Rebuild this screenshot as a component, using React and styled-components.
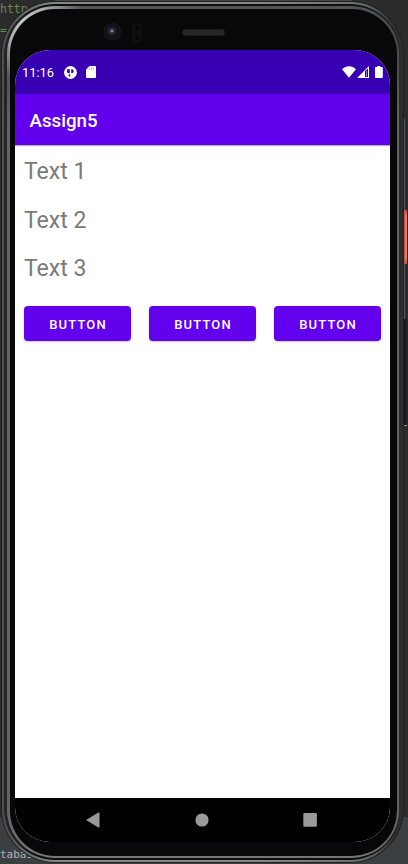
import React from "react";
import styled, { createGlobalStyle } from "styled-components";

const GlobalStyle = createGlobalStyle`
  * { box-sizing: border-box; }
  body { margin: 0; background: #2b2b2b; overflow: hidden; }
`;

const Desktop = styled.div`
  display: grid;
  width: 408px;
  height: 864px;
  overflow: hidden;
  background:
    linear-gradient(#454646, #454646) 55px 0 / 297px 2px no-repeat,
    linear-gradient(#2b2b2b 0 817px, #3c3f41 817px);
  font-family: Roboto, sans-serif;
`;

const Editor = styled.div`
  grid-area: 1 / 1;
  display: flex;
  flex-direction: column;
  padding: 2px 0;
  font: 11.5px/14px "DejaVu Sans Mono", monospace;
  color: #6a8759;
`;

const CodeLine = styled.span`
  margin-bottom: 7px;
`;

const PanelTab = styled.span`
  margin-top: auto;
  font-size: 11px;
  line-height: 14px;
  color: #b0b3b5;
`;

const Emulator = styled.div`
  grid-area: 1 / 1;
  display: flex;
  padding: 1px 0 0 1px;
`;

const Shell = styled.div`
  display: flex;
  flex: none;
  width: 403px;
  height: 862px;
  padding: 1px;
  border-radius: 54px;
  background: #202122;
`;

const OuterEdge = styled.div`
  display: flex;
  flex: 1;
  padding: 2px;
  border-radius: 53px;
  background: linear-gradient(90deg, #4c4e4f 0, #858787 12% 65%, #6c6e6e 90%, #2c2e30 98%);
`;

const Groove = styled.div`
  display: flex;
  flex: 1;
  padding: 2px 2px 2px 3px;
  border-radius: 51px;
  background: linear-gradient(90deg, #252627, #0d0e0f 10% 90%, #2a2c2e);
`;

const Rim = styled.div`
  display: flex;
  flex: 1;
  padding: 3px 2px 2px 3px;
  border-radius: 48px;
  background:
    radial-gradient(circle at 15px 13px, #c5c6c3 0, #aaaba8 24px, transparent 62px),
    linear-gradient(#555354 0, #464748 40px, #626465 120px, #626465 800px, #777);
`;

const Glass = styled.div`
  flex: 1;
  padding: 0 7px 14px 5px;
  border-radius: 45px;
  background: #08080a;
`;

const Hardware = styled.div`
  display: flex;
  align-items: flex-start;
  height: 41px;
  padding: 14px 0 0 88px;
`;

const Camera = styled.div`
  width: 19px;
  height: 19px;
  border-radius: 50%;
  background: radial-gradient(circle at 47% 42%, #85868f 0 1px, #24252f 2px, #1f2334 4px, #101012 5px, #161617 8px, #0c0c0d 10px);
`;

const Sensor = styled.div`
  width: 10px;
  height: 20px;
  margin-left: 10px;
  border-radius: 5px;
  background:
    radial-gradient(circle at 50% 5px, #070708 2px, #111112 3px, transparent 4px),
    radial-gradient(circle at 50% 15px, #070708 2px, #111112 3px, transparent 4px),
    #0f0f10;
`;

const Speaker = styled.div`
  width: 43px;
  height: 7px;
  margin: 6px 0 0 40px;
  border-radius: 3px;
  border: 1px solid #1b1b1c;
  background: #272727;
`;

const SideKeys = styled.div`
  flex: 1;
  display: flex;
  flex-direction: column;
  padding-top: 118px;
`;

const Key = styled.div`
  width: 3px;
  height: ${(p) => p.$h}px;
  border-left: 1px solid ${(p) => p.$edge};
  background: ${(p) => p.$fill};
`;

const Screen = styled.main`
  width: 375px;
  height: 792px;
  display: flex;
  flex-direction: column;
  border-radius: 35px;
  overflow: hidden;
  background: #fff;
`;

const StatusBar = styled.div`
  height: 44.4px;
  flex: none;
  display: flex;
  align-items: center;
  padding: 0 7px;
  background: #3700b3;
  color: #fff;
`;

const Clock = styled.span`
  width: 42px;
  padding-top: 1px;
  font-size: 12.9px;
  line-height: 16px;
`;

const StatusIcons = styled.div`
  display: flex;
  align-items: center;
  gap: ${(p) => p.$gap}px;
  margin-left: ${(p) => (p.$end ? "auto" : "0")};
  svg { display: block; }
`;

const AppBar = styled.header`
  height: 50.6px;
  flex: none;
  display: flex;
  align-items: center;
  padding: 2px 14.5px 0;
  background: #6200ee;
  color: #fff;
  font-size: 18.7px;
  font-weight: 500;
  box-shadow: 0 1px 1px rgba(0, 0, 0, 0.3);
`;

const Content = styled.section`
  flex: 1;
  padding: 9px 9px 0;
`;

const Label = styled.div`
  height: 48.7px;
  padding-top: 4px;
  font-size: 23px;
  line-height: 27px;
  color: #7a7a7a;
`;

const ButtonRow = styled.div`
  display: flex;
  justify-content: space-between;
  padding-top: 6px;
`;

const Button = styled.button`
  width: 107px;
  height: 35px;
  padding: 2px 0 0 1px;
  border: 0;
  border-radius: 4px;
  background: #6200ee;
  color: #fff;
  font: 500 13px/16px Roboto, sans-serif;
  letter-spacing: 1.15px;
  box-shadow: 0 1px 2px rgba(0, 0, 0, 0.22);
`;

const NavBar = styled.nav`
  height: 44px;
  flex: none;
  display: flex;
  align-items: center;
  justify-content: space-between;
  padding: 0 73px 0 71px;
  background: #000;
  svg { display: block; }
`;

export default function App() {
  return (
    <>
      <GlobalStyle />
      <Desktop>
        <Editor>
          <CodeLine>http</CodeLine>
          <CodeLine>=</CodeLine>
          <PanelTab>tabas</PanelTab>
        </Editor>
        <Emulator>
          <Shell>
            <OuterEdge>
              <Groove>
                <Rim>
                  <Glass>
                    <Hardware>
                      <Camera />
                      <Sensor />
                      <Speaker />
                    </Hardware>
                    <Screen>
                      <StatusBar>
                        <Clock>11:16</Clock>
                        <StatusIcons $gap={9}>
                          <svg width="13" height="13" viewBox="0 0 13 13">
                            <circle cx="6.5" cy="6.5" r="6.4" fill="#fff" />
                            <path d="M3 3.2h2.8v4.1H4.6A1.8 1.8 0 0 1 3 5.5Z" fill="#3700b3" />
                            <path d="M7.2 3.2h.6a1.9 1.9 0 0 1 0 3.9h-.6ZM4.6 8.3h1.6v2.6L4.6 9.8Z" fill="#3700b3" />
                          </svg>
                          <svg width="10" height="12" viewBox="0 0 10 12">
                            <path fill="#fff" d="M3.5 0H9a1 1 0 0 1 1 1v10a1 1 0 0 1-1 1H1a1 1 0 0 1-1-1V3.5Z" />
                            <path stroke="#3700b3" strokeWidth=".8" opacity=".4" d="M3.5 1.5v2M5.5 1.5v2M7.5 1.5v2" />
                          </svg>
                        </StatusIcons>
                        <StatusIcons $end $gap={1}>
                          <svg width="14" height="12" viewBox="0 0 14 12">
                            <path fill="#fff" d="M0 3.2C4-.9 10-.9 14 3.2L7 11.8Z" />
                          </svg>
                          <svg width="12" height="12" viewBox="0 0 12 12">
                            <path fill="#fff" fillRule="evenodd" d="M12 0v12H0ZM8 5v6h3V2.4Z" />
                            <path fill="#fff" d="M9 5h1v6H9z" opacity=".45" />
                          </svg>
                          <svg width="13" height="12" viewBox="0 0 13 12">
                            <path fill="#fff" d="M7.2 0h3v1H12a.8.8 0 0 1 .8.8V11a1 1 0 0 1-1 1H6a1 1 0 0 1-1-1V1.8A.8.8 0 0 1 5.8 1h1.4Z" />
                          </svg>
                        </StatusIcons>
                      </StatusBar>
                      <AppBar>Assign5</AppBar>
                      <Content>
                        <Label>Text 1</Label>
                        <Label>Text 2</Label>
                        <Label>Text 3</Label>
                        <ButtonRow>
                          <Button>BUTTON</Button>
                          <Button>BUTTON</Button>
                          <Button>BUTTON</Button>
                        </ButtonRow>
                      </Content>
                      <NavBar>
                        <svg width="14" height="16" viewBox="0 0 14 16"><path fill="#999" d="M0 8 12.5.4Q13.5 0 13.5 1v14q0 1-1 .6Z" /></svg>
                        <svg width="14" height="14" viewBox="0 0 14 14"><circle cx="7" cy="7" r="6.6" fill="#999" /></svg>
                        <svg width="14" height="14" viewBox="0 0 14 14"><rect x=".3" width="13.6" height="13.8" rx="1" fill="#999" /></svg>
                      </NavBar>
                    </Screen>
                  </Glass>
                </Rim>
              </Groove>
            </OuterEdge>
          </Shell>
          <SideKeys>
            <Key $h={91} $edge="#565859" $fill="#2b2b2b" />
            <Key $h={54} $edge="#c4563f" $fill="linear-gradient(#b14e3c, #ed7861 6px 48px, #b14e3c)" />
            <Key $h={55} $edge="#565859" $fill="#2b2b2b" />
            <Key $h={106} $edge="#151617" $fill="#202122" />
            <Key $h={1} $edge="#929494" $fill="#929494" />
          </SideKeys>
        </Emulator>
      </Desktop>
    </>
  );
}
